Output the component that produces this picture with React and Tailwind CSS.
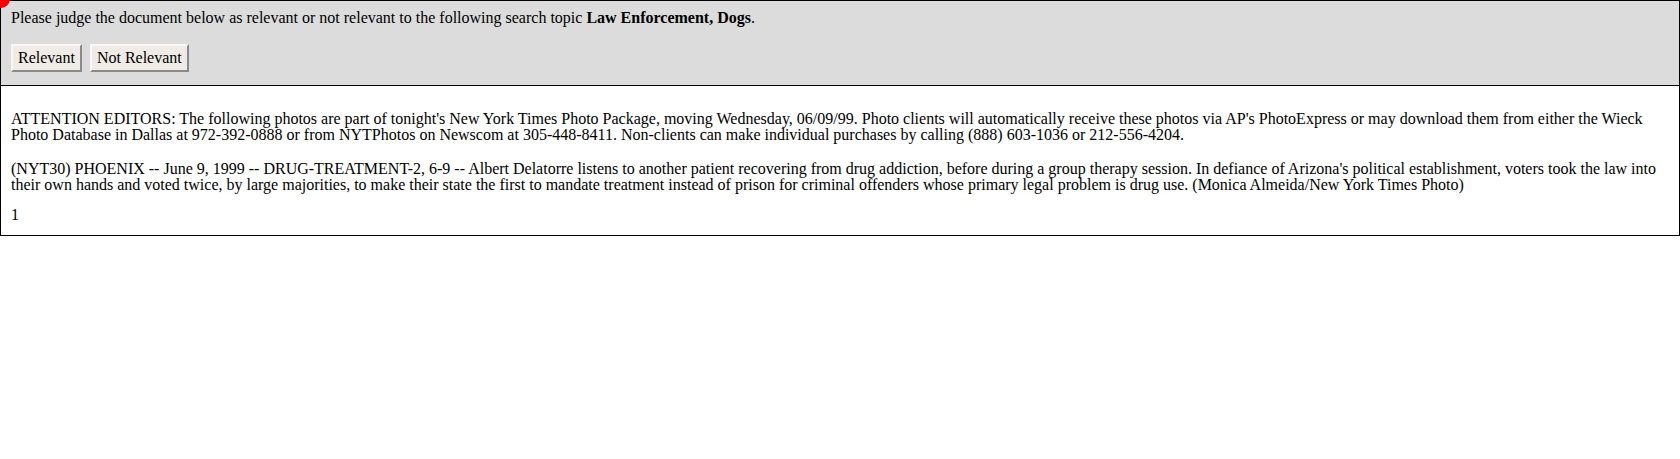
export default function App() {
  const btn =
    "h-[28px] px-[5px] bg-[#efebe7] border-2 border-t-[#f8f8f8] border-l-[#f8f8f8] border-b-[#8a8a8a] border-r-[#8a8a8a] text-[16px] leading-[16px] text-black";

  return (
    <div className="relative border border-black font-['Liberation_Serif',serif] text-[16px] leading-[16px] text-black">
      <div className="absolute -left-[9px] -top-[11px] w-[18px] h-[18px] rounded-full bg-[#ff0000]" />
      <div className="bg-[#dcdcdc] border-b border-black px-[10px] pt-[9px] pb-[13px]">
        <p>
          Please judge the document below as relevant or not relevant to the following search topic{" "}
          <b>Law Enforcement, Dogs</b>.
        </p>
        <div className="mt-[18px] flex gap-[8px]">
          <button className={btn}>Relevant</button>
          <button className={btn}>Not Relevant</button>
        </div>
      </div>
      <div className="px-[10px] pt-[25px] pb-[12px]">
        <p>
          ATTENTION EDITORS: The following photos are part of tonight's New York Times Photo Package, moving
          Wednesday, 06/09/99. Photo clients will automatically receive these photos via AP's PhotoExpress or may
          download them from either the Wieck Photo Database in Dallas at 972-392-0888 or from NYTPhotos on Newscom
          at 305-448-8411. Non-clients can make individual purchases by calling (888) 603-1036 or 212-556-4204.
        </p>
        <p className="mt-[18px]">
          (NYT30) PHOENIX -- June 9, 1999 -- DRUG-TREATMENT-2, 6-9 -- Albert Delatorre listens to another patient
          recovering from drug addiction, before during a group therapy session. In defiance of Arizona's political
          establishment, voters took the law into their own hands and voted twice, by large majorities, to make their
          state the first to mandate treatment instead of prison for criminal offenders whose primary legal problem
          is drug use. (Monica Almeida/New York Times Photo)
        </p>
        <p className="mt-[14px]">1</p>
      </div>
    </div>
  );
}
